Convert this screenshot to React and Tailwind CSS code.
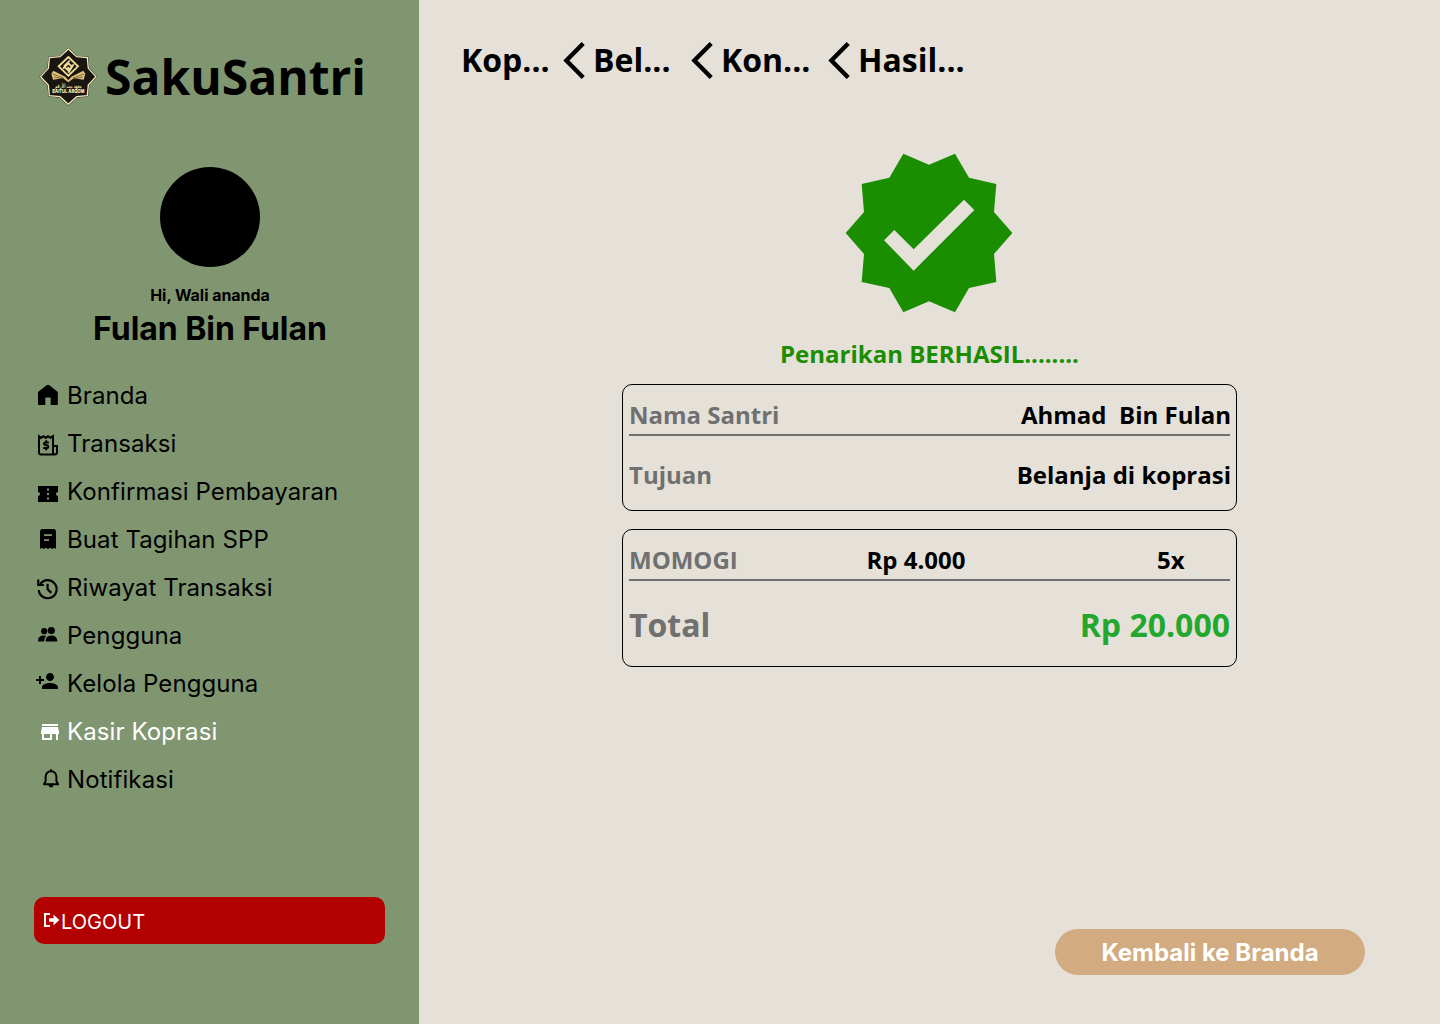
import React from "react";

const HomeIcon = () => (
  <svg className="size-6" viewBox="0 0 24 24" fill="currentColor">
    <path d="M2 22V9L10.6 2.3Q12 1.2 13.4 2.3L21.8 9V22H14.7V14.6H9.3V22Z" />
  </svg>
);

const TransactionIcon = () => (
  <svg className="size-6" viewBox="0 0 24 24" fill="none" stroke="currentColor" strokeWidth="2">
    <path d="M17 19.8V2.2L14.4 3.9L12 2.2L9.8 3.9L7.5 2.2L5.2 3.9L3 2.2V18.5Q3 20.4 5 20.4H19Q21 20.4 21 18.5V12H17V18.5Q17 20 18.6 20.4" />
    <path d="M12.8 8.4H9.2Q8 8.4 8 9.7Q8 10.8 9.3 11L11 11.3Q12.3 11.6 12.3 12.7Q12.3 14 11 14H7.2M10.2 6.2V8.3M10.2 14V16.2" />
  </svg>
);

const TicketIcon = () => (
  <svg className="size-6" viewBox="0 0 24 24" fill="currentColor">
    <path d="M22 10V4H2v6c1.1 0 2 .9 2 2s-.9 2-2 2v6h20v-6c-1.1 0-2-.9-2-2s.9-2 2-2zm-9 7.5h-2v-2h2v2zm0-4.5h-2v-2h2v2zm0-4.5h-2v-2h2v2z" />
  </svg>
);

const BillIcon = () => (
  <svg className="size-6" viewBox="0 0 24 24" fill="currentColor">
    <path fillRule="evenodd" d="M4 22V4.5Q4 2 6.5 2H17.5Q20 2 20 4.5V22L18.4 20.7L16.4 22L14.2 20.7L12 22L9.8 20.7L7.6 22L5.6 20.7ZM8 7.3V9H16V7.3ZM8 12.3V14H13V12.3Z" />
  </svg>
);

const HistoryIcon = () => (
  <svg className="size-6" viewBox="0 0 24 24" fill="none" stroke="currentColor" strokeWidth="2.2">
    <path d="M2.7 13.2A9 9 0 1 0 4.3 7" />
    <path d="M2.3 2.6V8H7.8M11.6 6.8V12.2L15.3 15.9" />
  </svg>
);

const PeopleIcon = () => (
  <svg className="size-6" viewBox="0 0 24 24" fill="currentColor">
    <circle cx="8.2" cy="8.2" r="3.1" />
    <circle cx="15.3" cy="7.5" r="3.6" />
    <path d="M2 18.5V17.5Q2.4 12.7 7.7 12.6Q9.2 12.6 10.1 13Q8.2 14.7 8 18.5ZM9.5 18.5Q9.6 12.4 15.3 12.4Q20.7 12.4 21.2 17.4V18.5Z" />
  </svg>
);

const AddUserIcon = () => (
  <svg className="size-6" viewBox="0 0 24 24" fill="currentColor">
    <path d="M15 12c2.21 0 4-1.79 4-4s-1.79-4-4-4-4 1.79-4 4 1.79 4 4 4zm-9-2V7H4v3H1v2h3v3h2v-3h3v-2H6zm9 4c-2.67 0-8 1.34-8 4v2h16v-2c0-2.66-5.33-4-8-4z" />
  </svg>
);

const StoreIcon = () => (
  <svg className="size-6" viewBox="0 0 24 24" fill="currentColor">
    <path d="M20 4H4v2h16V4zm1 10v-2l-1-5H4l-1 5v2h1v6h10v-6h4v6h2v-6h1zm-9 4H6v-4h6v4z" />
  </svg>
);

const BellIcon = () => (
  <svg className="size-6" viewBox="0 0 24 24" fill="none" stroke="currentColor" strokeWidth="2">
    <path strokeLinejoin="round" d="M12 4.3C8.6 4.3 6.6 6.7 6.6 9.8V14.2L4.9 17.2H19.1L17.4 14.2V9.8C17.4 6.7 15.4 4.3 12 4.3Z" />
    <path d="M12 2.2V4.6" />
    <path fill="currentColor" stroke="none" d="M9.3 17.5H14.7Q14.2 20.4 12 20.4Q9.8 20.4 9.3 17.5Z" />
  </svg>
);

const MENU = [
  { label: "Branda", Icon: HomeIcon, place: "mt-0" },
  { label: "Transaksi", Icon: TransactionIcon, place: "mt-1.5" },
  { label: "Konfirmasi Pembayaran", Icon: TicketIcon, place: "mt-1.5" },
  { label: "Buat Tagihan SPP", Icon: BillIcon, place: "mt-0" },
  { label: "Riwayat Transaksi", Icon: HistoryIcon, place: "mt-1" },
  { label: "Pengguna", Icon: PeopleIcon, place: "mt-0" },
  { label: "Kelola Pengguna", Icon: AddUserIcon, place: "-ml-px -mt-1" },
  { label: "Kasir Koprasi", Icon: StoreIcon, place: "ml-0.5 mt-0.5", active: true },
  { label: "Notifikasi", Icon: BellIcon, place: "ml-[3px] mt-0" },
];

const Logo = () => (
  <svg className="h-[75px] w-20 shrink-0" viewBox="0 0 240 225">
    <path
      d="M115 27L140 50L172 53L175 85L198 110L175 135L172 167L140 170L115 193L90 170L58 167L55 135L32 110L55 85L58 53L90 50Z"
      fill="#191611" stroke="#191611" strokeWidth="6"
    />
    <path
      d="M115 27L140 50L172 53L175 85L198 110L175 135L172 167L140 170L115 193L90 170L58 167L55 135L32 110L55 85L58 53L90 50Z"
      fill="#191611" stroke="#f6eabb" strokeWidth="4"
    />
    <g fill="none" stroke="#f0dc98" strokeWidth="5.5">
      <path d="M115 51L144 79L115 107L86 79Z" />
      <path d="M102 79L119 62M99 86L115 70L126 80L115 92L105 82M131 73L115 98M115 80V87" />
    </g>
    <path fill="#dcc078" d="M64 101L70 92L106 110L115 121L124 110L160 92L166 101L161 119L131 115L115 127L99 115L69 119Z" />
    <path fill="none" stroke="#4a3c1d" strokeWidth="2" d="M68 102L101 114M72 111L99 117M162 102L129 114M158 111L131 117" />
    <text x="115" y="143" textAnchor="middle" fontSize="18" fontWeight="700" fill="#e9d28c" fontFamily="DejaVu Sans, sans-serif" textLength="80" lengthAdjust="spacingAndGlyphs">معهد بيت الأرقم</text>
    <text x="115" y="158.5" textAnchor="middle" fontSize="14" fontWeight="800" fill="#fff0bd" fontFamily="Inter, sans-serif" textLength="96" lengthAdjust="spacingAndGlyphs">BAITUL ARQOM</text>
  </svg>
);

const BackChevron = () => (
  <svg className="h-10 w-6 shrink-0" viewBox="0 0 24 40" fill="none" stroke="#000" strokeWidth="4.4">
    <path d="M21.2 3.5L4.4 20.5L21.2 37.5" />
  </svg>
);

const CRUMBS = [
  { label: "Kop...", width: "w-[101px]" },
  { label: "Bel...", width: "w-[104px]" },
  { label: "Kon...", width: "w-[113px]" },
  { label: "Hasil...", width: "w-[120px]" },
];

function Sidebar() {
  return (
    <aside className="flex w-[419px] shrink-0 flex-col bg-[#809671] font-['Inter',sans-serif]">
      <div className="ml-[30px] mt-10 flex h-[75px] items-center">
        <Logo />
        <span className="-mt-0.5 -ml-[5px] font-['Open_Sans',sans-serif] text-5xl font-bold">SakuSantri</span>
      </div>
      <div className="mt-[52px] flex flex-col items-center pl-px">
        <div className="size-[100px] rounded-full bg-black" />
        <p className="mt-[18px] text-base leading-5 font-bold tracking-[-0.04px]">Hi, Wali ananda</p>
        <h2 className="mt-1 text-[32px] leading-[39px] font-bold tracking-[-0.05px]">Fulan Bin Fulan</h2>
      </div>
      <nav className="mt-[23px] flex flex-col">
        {MENU.map(({ label, Icon, place, active }) => (
          <a key={label} className={active ? "flex h-12 items-center pl-9 text-white" : "flex h-12 items-center pl-9"}>
            <span className="w-[31px] shrink-0">
              <span className={"block size-6 " + place}><Icon /></span>
            </span>
            <span className="text-2xl leading-[29px] tracking-[0.09px] whitespace-nowrap">{label}</span>
          </a>
        ))}
      </nav>
      <button className="mx-[34px] mt-[94px] flex h-[47px] items-center rounded-[10px] bg-[#b30000] pl-[9px] text-xl text-white">
        <svg className="-mt-0.5 h-4 w-[18px]" viewBox="0 0 18 16" fill="none">
          <path d="M7 2H2V14H7" stroke="currentColor" strokeWidth="2" />
          <path d="M6 6.2H10.5V2.5L16.3 8L10.5 13.5V9.8H6Z" fill="currentColor" />
        </svg>
        <span className="pt-0.5">LOGOUT</span>
      </button>
    </aside>
  );
}

export default function App() {
  return (
    <div className="flex h-[1024px] w-[1440px] overflow-hidden bg-[#e5e0d8] text-black">
      <Sidebar />
      <main className="flex flex-1 flex-col font-['Open_Sans',sans-serif] font-bold">
        <header className="mt-10 ml-[42px] flex h-10 items-center text-[32px]">
          {CRUMBS.map(({ label, width }, i) => (
            <React.Fragment key={label}>
              {i > 0 && <BackChevron />}
              <span className={"shrink-0 pl-[7px] first:pl-0 " + width}>{label}</span>
            </React.Fragment>
          ))}
        </header>
        <section className="mt-[60px] ml-[203px] flex w-[615px] flex-col text-2xl">
          <svg className="h-[190px] w-[200px] self-center" viewBox="0 0 600 570">
            <path
              fill="#1a8d00" fillRule="evenodd"
              d="M220 41L297 74L375 41L417 113L499 132L492 216L547 279L492 342L499 426L417 444L375 517L297 484L220 517L178 444L95 426L102 342L47 279L102 216L95 132L178 113ZM251 392L433 210L402 179L251 328L193 270L162 301Z"
            />
          </svg>
          <p className="mt-[7px] text-center leading-[33px] text-[#1a8d00]">Penarikan BERHASIL........</p>
          <div className="mt-[14px] h-[127px] rounded-[10px] border border-black px-1.5">
            <div className="flex h-[51px] items-end justify-between border-b-2 border-[#6f706f] pb-[3px]">
              <span className="text-[#6f706f]">Nama Santri</span>
              <span className="-mr-px whitespace-pre">Ahmad  Bin Fulan</span>
            </div>
            <div className="mt-[23px] flex justify-between">
              <span className="text-[#6f706f]">Tujuan</span>
              <span className="-mr-px">Belanja di koprasi</span>
            </div>
          </div>
          <div className="mt-[18px] h-[138px] rounded-[10px] border border-black px-1.5">
            <div className="flex h-[51px] items-end border-b-2 border-[#6f706f] pb-[3px]">
              <span className="w-[237.5px] text-[#6f706f]">MOMOGI</span>
              <span className="w-[290.5px]">Rp 4.000</span>
              <span>5x</span>
            </div>
            <div className="mt-[22px] flex justify-between text-[32px] leading-[44px]">
              <span className="text-[#6f706f]">Total</span>
              <span className="text-[#22a82e]">Rp 20.000</span>
            </div>
          </div>
        </section>
        <button className="mt-auto mr-[75px] mb-[49px] h-[46px] w-[310px] self-end rounded-full bg-[#d2ab80] pt-0.5 font-['Inter',sans-serif] text-2xl font-bold text-white">
          Kembali ke Branda
        </button>
      </main>
    </div>
  );
}
